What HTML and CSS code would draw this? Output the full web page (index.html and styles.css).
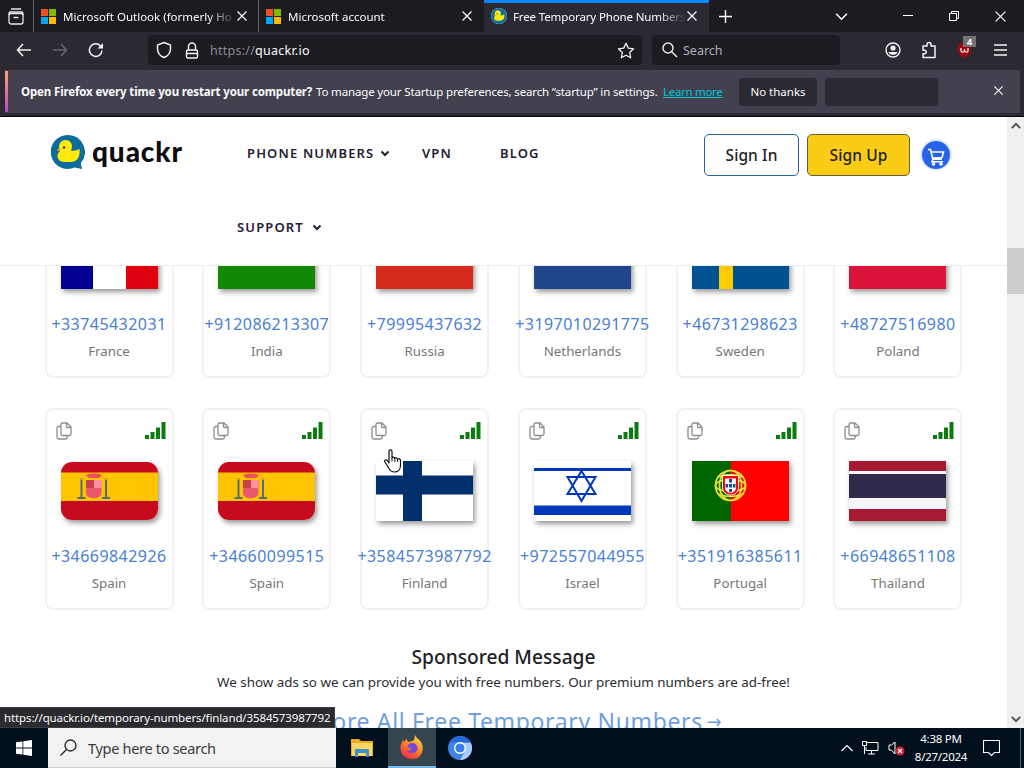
FILE: index.html
```html
<!DOCTYPE html>
<html lang="en">
<head>
    <meta charset="UTF-8">
    <meta name="viewport" content="width=device-width, initial-scale=1.0">
    <title>Free Temporary Phone Numbers</title>
    <link rel="stylesheet" href="styles.css">
</head>
<body>
    <svg class="defs" width="0" height="0">
        <symbol id="ms" viewBox="0 0 16 16">
            <path fill="#f25022" d="M0 0h7.5v7.5H0z"/><path fill="#7fba00" d="M8.5 0H16v7.5H8.5z"/>
            <path fill="#00a4ef" d="M0 8.500h7.500V16H0z"/><path fill="#ffb900" d="M8.500 8.500H16V16H8.500z"/>
        </symbol>
        <symbol id="duck" viewBox="0 0 34 34">
            <path fill="#0c6c9c" d="M17 0a17 17 0 1 0 6.500 32.600L31 34l-1.200-6A17 17 0 0 0 17 0z"/>
            <path fill="#ffeb0a" d="M8 12c0-4 3-7 6.500-7 4 0 6.500 3 6.500 6 0 2-1 3.500-1 4.500 3 .8 6-.5 8.500-1.500.8 7-1.500 13-9 13h-6c-4.500 0-7-3-7-6 0-2 1-3.500 2.500-4.500C8 15.500 8 14 8 12z"/>
            <path fill="#f29a1f" d="M9 13.500l-3 .8c0 1.700 1.500 2.200 3.500 1.700z"/>
            <circle cx="13" cy="12.500" r="1.200" fill="#34424c"/>
        </symbol>
        <symbol id="x" viewBox="0 0 12 12"><path d="M1.500 1.500l9 9M10.500 1.500l-9 9" fill="none" stroke="currentColor" stroke-width="1.200"/></symbol>
        <symbol id="down" viewBox="0 0 12 12"><path d="M1 3.500l5 5 5-5" fill="none" stroke="currentColor" stroke-width="1.500"/></symbol>
        <symbol id="caret" viewBox="0 0 10 10"><path d="M1.500 3.500L5 7l3.500-3.500" fill="none" stroke="currentColor" stroke-width="2"/></symbol>
        <symbol id="copy" viewBox="0 0 16 18">
            <path d="M6.500 1H11l4 4v7a1.500 1.500 0 0 1-1.500 1.500H6.500A1.500 1.500 0 0 1 5 12V2.500A1.500 1.500 0 0 1 6.500 1zM10.500 1v3.500a1 1 0 0 0 1 1H15M5 4.500H3A1.800 1.800 0 0 0 1 6.300v8.900A1.800 1.800 0 0 0 2.800 17h6.700a1.800 1.800 0 0 0 1.800-1.800v-1.700" fill="none" stroke="#8d8d91" stroke-width="1.300"/>
        </symbol>
        <symbol id="signal" viewBox="0 0 21 17">
            <path fill="#0b7d10" d="M0 13h4v4H0zM5.500 10h4v7h-4zM11 5.500h4V17h-4zM16.500 0h4v17h-4z"/>
        </symbol>
        <symbol id="spain" viewBox="0 0 97 58">
            <path fill="#c60b1e" d="M0 0h97v58H0z"/><path fill="#ffc400" d="M0 10.500h97v28.500H0z"/>
            <path fill="#596a7b" d="M19.500 17h2v18h-2zM44 17h2v18h-2zM16.500 35h8v2h-8zM41 35h8v2h-8z"/>
            <path fill="#c9a33a" d="M19 16h3v2h-3zM43.500 16h3v2h-3z"/>
            <path fill="#ed4f5c" d="M25 13c5-2 11-2 16 0l-3 3H28z"/>
            <path fill="#ea596e" d="M25 18h15.500v13c0 7-15.500 7-15.500 0z"/>
            <path fill="#c8414b" d="M25 18h8v8h-8z"/><path fill="#ff8e9f" d="M33 18h7.500v8H33z"/>
        </symbol>
        <symbol id="portugal" viewBox="0 0 97 60">
            <path fill="#060" d="M0 0h39v60H0z"/><path fill="#f00" d="M38.800 0H97v60H38.800z"/>
            <g fill="none" stroke="#e9e336" stroke-width="1.700">
                <circle cx="38.500" cy="24.500" r="15"/><ellipse cx="38.500" cy="24.500" rx="15" ry="6"/>
                <ellipse cx="38.500" cy="24.500" rx="11" ry="15"/><path d="M26 16q12.500-5 25 0M26 33q12.500 5 25 0"/>
            </g>
            <path fill="#f00" stroke="#fff" d="M30.500 14.500h16v12c0 10-16 10-16 0z"/>
            <path fill="#fff" d="M33 17.500h11v9c0 7-11 7-11 0z"/>
            <path fill="#1b4a9c" d="M37 18h3v3.500h-3zM37 23h3v3.500h-3zM37 28h3v3h-3zM33.500 23h2.500v3.500h-2.500zM41 23h2.500v3.500H41z"/>
        </symbol>
    </svg>

    <div class="tabs">
        <div class="firefox-view">
            <svg width="16" height="17" viewBox="0 0 16 17" fill="none" stroke="#e8e8ea" stroke-width="1.300"><path d="M3 1h10M1.500 4h13M5.500 9.500h5"/><rect x="1" y="5.500" width="14" height="10.500" rx="2"/><path d="M1 7V5.500A1.500 1.500 0 0 1 2.500 4M15 7V5.500A1.500 1.500 0 0 0 13.500 4"/></svg>
        </div>
        <div class="tab tab-one"><svg class="favicon"><use href="#ms"/></svg><span class="tab-title">Microsoft Outlook (formerly Ho</span><svg class="tab-close"><use href="#x"/></svg></div>
        <div class="tab"><svg class="favicon"><use href="#ms"/></svg><span class="tab-title">Microsoft account</span><svg class="tab-close"><use href="#x"/></svg></div>
        <div class="tab active"><svg class="favicon duck-icon"><use href="#duck"/></svg><span class="tab-title">Free Temporary Phone Numbers</span><svg class="tab-close"><use href="#x"/></svg></div>
        <svg class="new-tab" width="13" height="13" viewBox="0 0 13 13"><path d="M6.500 0v13M0 6.500h13" stroke="#fff" stroke-width="1.400"/></svg>
        <svg class="all-tabs"><use href="#down"/></svg>
        <div class="window-buttons">
            <svg width="12" height="12" viewBox="0 0 12 12"><path d="M1 5.500h10" stroke="#fff"/></svg>
            <svg width="12" height="12" viewBox="0 0 12 12" fill="none" stroke="#fff"><path d="M1.500 3.500h7v7h-7zM3.500 3.500v-2h7v7h-2"/></svg>
            <svg width="13" height="13"><use href="#x"/></svg>
        </div>
    </div>

    <div class="toolbar">
        <div class="nav-buttons">
            <svg width="16" height="16" viewBox="0 0 16 16" fill="none" stroke="#f2f2f4" stroke-width="1.500"><path d="M15 8H1.500M7 2L1.500 8 7 14"/></svg>
            <svg width="16" height="16" viewBox="0 0 16 16" fill="none" stroke="#68676d" stroke-width="1.500"><path d="M1 8h13.500M9 2l5.500 6L9 14"/></svg>
            <svg width="16" height="16" viewBox="0 0 16 16" fill="none" stroke="#f2f2f4" stroke-width="1.500"><path d="M14 8.500A6.300 6.300 0 1 1 12.500 4l1.500 2"/><path d="M15 1v5.500H9.500z" fill="#f2f2f4" stroke="none"/></svg>
        </div>
        <div class="url-bar">
            <svg width="16" height="18" viewBox="0 0 16 18" fill="none" stroke="#f2f2f4" stroke-width="1.400"><path d="M8 1.500L14.500 4v3.500c0 4-2.500 7.500-6.500 9-4-1.500-6.500-5-6.500-9V4z"/></svg>
            <svg width="14" height="17" viewBox="0 0 14 17" fill="none" stroke="#f2f2f4" stroke-width="1.400"><rect x="1.500" y="8" width="11" height="8" rx="1.500"/><path d="M3.500 8V4.500a3.500 3.500 0 0 1 7 0V8M2 11.500h10"/></svg>
            <span class="url"><span class="scheme">https://</span>quackr.io</span>
            <svg class="star" width="18" height="17" viewBox="0 0 18 17" fill="none" stroke="#f2f2f4" stroke-width="1.300"><path stroke-linejoin="round" d="M9 1.200l2.300 4.900 5.300.7-3.900 3.700 1 5.300L9 13.200l-4.700 2.600 1-5.300-3.900-3.700 5.300-.7z"/></svg>
        </div>
        <div class="search-bar">
            <svg width="16" height="16" viewBox="0 0 16 16" fill="none" stroke="#e8e8ea" stroke-width="1.500"><circle cx="6" cy="6" r="5"/><path d="M9.700 9.700L15 15"/></svg>
            <span>Search</span>
        </div>
        <div class="extensions">
            <svg width="16" height="16" viewBox="0 0 16 16"><circle cx="8" cy="8" r="7" fill="none" stroke="#f2f2f4" stroke-width="1.400"/><circle cx="8" cy="6" r="2.600" fill="#f2f2f4"/><path fill="#f2f2f4" d="M3.500 10h9c-1 3.800-8 3.800-9 0z"/></svg>
            <svg width="16" height="18" viewBox="0 0 16 18" fill="none" stroke="#f2f2f4" stroke-width="1.500"><path stroke-linejoin="round" d="M6 5V3.500a2 2 0 0 1 4 0V5h4v11.500H2v-3.800h1.500a1.700 1.700 0 0 0 0-3.500H2V5z"/></svg>
            <div class="ublock">
                <svg width="15" height="16" viewBox="0 0 15 16"><path fill="#9c0710" d="M7.500 0L14 3v5c0 4-3 6-6.500 8C4 14 1 12 1 8V3z"/><path d="M4 6v3q1.700 2.500 3.500 0V7v2q2 2.500 3.500 0V6" fill="none" stroke="#fff" stroke-width="1.200"/></svg>
                <span class="count">4</span>
            </div>
            <svg class="app-menu" width="13" height="12" viewBox="0 0 13 12"><path d="M0 1h13M0 6h13M0 11h13" stroke="#f2f2f4" stroke-width="1.400"/></svg>
        </div>
    </div>

    <div class="notice-wrap">
        <div class="notice">
            <b class="notice-title">Open Firefox every time you restart your computer?</b>
            <span class="notice-text">To manage your Startup preferences, search “startup” in settings.</span>
            <span class="learn"><a>Learn more</a></span>
            <span class="notice-button">No thanks</span>
            <span class="notice-button blank"></span>
            <svg class="notice-close"><use href="#x"/></svg>
        </div>
    </div>

    <div class="viewport">
        <div class="page">
            <header class="header">
                <div class="logo"><svg width="34" height="34"><use href="#duck"/></svg><span>quackr</span></div>
                <nav class="menu">
                    <div class="menu-row first"><span class="phone">PHONE NUMBERS</span><svg class="caret"><use href="#caret"/></svg><span class="vpn">VPN</span><span class="blog">BLOG</span></div>
                    <div class="menu-row"><span class="support">SUPPORT</span><svg class="caret"><use href="#caret"/></svg></div>
                </nav>
                <div class="account">
                    <span class="button sign-in">Sign In</span>
                    <span class="button sign-up">Sign Up</span>
                    <span class="cart"><svg width="17" height="18" viewBox="0 0 17 18" fill="none" stroke="#fff" stroke-width="1.600"><path d="M0 1.500h2.500l2.300 9.800h9M3.500 4h12l-1.500 5.500-9.500.5M5 11.500l-1 2.300h11"/><circle cx="5.500" cy="16" r="1"/><circle cx="13" cy="16" r="1"/></svg></span>
                </div>
            </header>
            <main class="content">
                <div class="numbers">
                    <div class="card"><div class="flag france"></div><a>+33745432031</a><p>France</p></div>
                    <div class="card"><div class="flag india"></div><a>+912086213307</a><p>India</p></div>
                    <div class="card"><div class="flag russia"></div><a>+79995437632</a><p>Russia</p></div>
                    <div class="card"><div class="flag netherlands"></div><a>+3197010291775</a><p>Netherlands</p></div>
                    <div class="card"><div class="flag sweden"></div><a>+46731298623</a><p>Sweden</p></div>
                    <div class="card"><div class="flag poland"></div><a>+48727516980</a><p>Poland</p></div>

                    <div class="card"><div class="card-top"><svg class="copy"><use href="#copy"/></svg><svg class="signal"><use href="#signal"/></svg></div><div class="flag spain"><svg width="97" height="58"><use href="#spain"/></svg></div><a>+34669842926</a><p>Spain</p></div>
                    <div class="card"><div class="card-top"><svg class="copy"><use href="#copy"/></svg><svg class="signal"><use href="#signal"/></svg></div><div class="flag spain"><svg width="97" height="58"><use href="#spain"/></svg></div><a>+34660099515</a><p>Spain</p></div>
                    <div class="card"><div class="card-top"><svg class="copy"><use href="#copy"/></svg><svg class="signal"><use href="#signal"/></svg></div><div class="flag"><svg width="97" height="60"><path fill="#fff" d="M0 0h97v60H0z"/><path fill="#002f6c" d="M27 0h19v60H27zM0 14.500h97v19H0z"/></svg></div><a>+3584573987792</a><p>Finland</p>
                        <svg class="pointer" width="18" height="24" viewBox="0 0 18 24"><path fill="#fff" stroke="#111" stroke-width="1.200" stroke-linejoin="round" d="M5 14V2.500C5 .3 8 .3 8 2.500V9c.5-1.500 2.700-1 2.800.5.6-1.200 2.600-.7 2.800.8.800-1 2.900-.5 2.900 1.200v5c0 4-2.500 6.500-6 6.500-3 0-4.500-1.500-5.500-3.500l-4-6.500c-1-1.800 1-3 2.300-1.500z"/><path d="M8 9v3.500M10.800 9.500V13M13.600 10.500V13" stroke="#111"/></svg>
                    </div>
                    <div class="card"><div class="card-top"><svg class="copy"><use href="#copy"/></svg><svg class="signal"><use href="#signal"/></svg></div><div class="flag"><svg width="97" height="60"><path fill="#fff" d="M0 0h97v60H0z"/><path fill="#0038b8" d="M0 7h97v3H0zM0 44.500h97V54H0z"/><path d="M47.500 10l14 23h-28zM47.500 40l14-24h-28z" fill="none" stroke="#0038b8" stroke-width="2"/></svg></div><a>+972557044955</a><p>Israel</p></div>
                    <div class="card"><div class="card-top"><svg class="copy"><use href="#copy"/></svg><svg class="signal"><use href="#signal"/></svg></div><div class="flag"><svg width="97" height="60"><use href="#portugal"/></svg></div><a>+351916385611</a><p>Portugal</p></div>
                    <div class="card"><div class="card-top"><svg class="copy"><use href="#copy"/></svg><svg class="signal"><use href="#signal"/></svg></div><div class="flag thailand"></div><a>+66948651108</a><p>Thailand</p></div>
                </div>
                <h2 class="sponsored">Sponsored Message</h2>
                <p class="ads">We show ads so we can provide you with free numbers. Our premium numbers are ad-free!</p>
                <a class="explore">Explore All Free Temporary Numbers <span class="arrow">→</span></a>
            </main>
        </div>
        <div class="scrollbar">
            <svg width="10" height="10" viewBox="0 0 12 12"><path d="M1 8.500l5-5 5 5" fill="none" stroke="#505050" stroke-width="2.200"/></svg>
            <div class="thumb"></div>
            <svg class="scroll-down" width="10" height="10" viewBox="0 0 12 12"><path d="M1 3.500l5 5 5-5" fill="none" stroke="#505050" stroke-width="2.200"/></svg>
        </div>
        <div class="link-status"><span>https://quackr.io/temporary-numbers/finland/3584573987792</span></div>
    </div>

    <div class="taskbar">
        <div class="start"><svg width="16" height="16" viewBox="0 0 16 16"><path fill="#fff" d="M0 2.300l6.500-.9v6.200H0zM7.300 1.300L16 0v7.600H7.300zM0 8.400h6.500v6.200L0 13.700zM7.300 8.400H16V16l-8.700-1.300z"/></svg></div>
        <div class="task-search">
            <svg width="17" height="17" viewBox="0 0 17 17" fill="none" stroke="#222" stroke-width="1.300"><circle cx="10.500" cy="6.500" r="5.500"/><path d="M6.500 10.500L.5 16.500"/></svg>
            <span>Type here to search</span>
        </div>
        <div class="app explorer"><svg width="22" height="20" viewBox="0 0 22 20"><path fill="#e9ad21" d="M0 1h8l2 2h12v15H0z"/><path fill="#ffd75e" d="M1 5h20v13H1z"/><path fill="#3d8fd1" d="M4 11h14v8h-3v-4H7v4H4z"/></svg></div>
        <div class="app current"><svg width="24" height="24" viewBox="0 0 24 24">
            <defs><linearGradient id="fire" x1=".8" y1="0" x2=".2" y2="1"><stop offset="0" stop-color="#ffe14a"/><stop offset=".45" stop-color="#ff8a1f"/><stop offset="1" stop-color="#f5224e"/></linearGradient></defs>
            <path fill="url(#fire)" d="M15 0c1 3 4 4 6 7 4 7 1 17-9 17C4 24 0 18 .5 12 .7 9 2 7 3 5l1 2c1-1 1-2 2.500-3l1.500 3c2-.5 5-1 6-2 .8-1.500.5-3 1-5z"/>
            <path fill="#7747d6" d="M12 8c4 0 6 3 5.500 6-.7 5-8.500 6-11 1.500 3 .5 4-.5 5.500-1.500-2-1-3-2-5-2 1-3 3-4 5-4z"/></svg></div>
        <div class="app"><svg width="24" height="24" viewBox="0 0 24 24"><circle cx="12" cy="12" r="12" fill="#3f82e8"/><path fill="#a9cbfb" d="M12 6.500h10.700A12 12 0 0 1 12 24l5-9z"/><path fill="#246bd6" d="M1.500 6.200A12 12 0 0 1 22.700 6.500H12z"/><circle cx="12" cy="12" r="6" fill="#fff"/><circle cx="12" cy="12" r="4.600" fill="#377ee6"/></svg></div>
        <div class="tray">
            <svg width="12" height="8" viewBox="0 0 12 8"><path d="M.5 7L6 1.500 11.500 7" fill="none" stroke="#fff" stroke-width="1.200"/></svg>
            <svg width="17" height="14" viewBox="0 0 17 14" fill="none" stroke="#fff"><path d="M5 1.500h11v8H4V6M9.500 9.500v3.500M6 13h7M.5.500h4v4h-4zM2.500 4.500V13"/></svg>
            <svg width="17" height="16" viewBox="0 0 17 16"><path d="M1 5h2.500L7 2v12l-3.500-4H1z" fill="none" stroke="#fff"/><circle cx="12" cy="11" r="4.500" fill="#d51f30"/><path d="M10 9l4 4M14 9l-4 4" stroke="#fff" stroke-width="1.200"/></svg>
            <div class="clock"><span>4:38 PM</span><span class="date">8/27/2024</span></div>
            <svg class="action" width="17" height="17" viewBox="0 0 17 17"><path d="M.5.500h16v12h-5L8.500 15.500l-3-3h-5z" fill="none" stroke="#fff" stroke-width="1.100"/></svg>
        </div>
    </div>
</body>
</html>
```
FILE: styles.css
```css
* {
    box-sizing: border-box;
}
body {
    margin: 0;
    width: 1024px;
    height: 768px;
    overflow: hidden;
    display: flex;
    flex-direction: column;
    background: #fff;
    font-family: "Noto Sans", "Open Sans", sans-serif;
    white-space: nowrap;
}
.defs {
    display: none;
}
svg {
    flex: none;
}

/* browser tabs */
.tabs {
    height: 32px;
    display: flex;
    align-items: center;
    background: #1c1b22;
    color: #fbfbfe;
    font-size: 11.5px;
}
.firefox-view {
    width: 34px;
    height: 32px;
    padding-left: 8px;
    display: flex;
    align-items: center;
    border-right: 1px solid #64636a;
}
.tab {
    width: 225px;
    height: 32px;
    padding: 0 11px 0 7px;
    display: flex;
    align-items: center;
}
.tab-one {
    border-right: 1px solid #64636a;
    padding-right: 10px;
}
.active {
    background: #2b2a33;
    border-top: 3px solid #0a84ff;
    padding-bottom: 3px;
    letter-spacing: -.13px;
}
.favicon {
    width: 15px;
    height: 15px;
    margin-right: 7px;
}
.duck-icon {
    width: 16px;
    height: 16px;
    margin-right: 6px;
    background: #b8e4f2;
    border-radius: 8px;
}
.tab-title {
    width: 172px;
    -webkit-mask-image: linear-gradient(to right, #000 145px, transparent 174px);
    mask-image: linear-gradient(to right, #000 145px, transparent 174px);
}
.tab-close {
    width: 12px;
    height: 12px;
    margin-left: auto;
}
.new-tab {
    margin-left: 10px;
}
.all-tabs {
    width: 13px;
    height: 13px;
    margin-left: 103px;
}
.window-buttons {
    margin: 0 17px 0 auto;
    display: flex;
    gap: 34px;
}

/* address bar */
.toolbar {
    height: 36px;
    display: flex;
    align-items: center;
    background: #2b2a33;
    color: #fbfbfe;
    font-size: 12.500px;
}
.nav-buttons {
    width: 148px;
    padding-left: 16px;
    display: flex;
    gap: 20px;
}
.url-bar {
    width: 494px;
    height: 30px;
    padding: 0 7px 0 8px;
    display: flex;
    align-items: center;
    background: #1c1b22;
    border-radius: 4px;
}
.url-bar svg + svg {
    margin-left: 13px;
}
.url {
    margin-left: 11px;
    letter-spacing: .25px;
}
.scheme {
    color: #8b8a91;
}
.star {
    margin-left: auto;
}
.search-bar {
    width: 188px;
    height: 30px;
    margin-left: 10px;
    padding-left: 10px;
    display: flex;
    align-items: center;
    gap: 5px;
    background: #1c1b22;
    border-radius: 4px;
    color: #b0afb5;
}
.extensions {
    margin: 0 17px 0 auto;
    display: flex;
    align-items: center;
    gap: 20px;
}
.app-menu {
    margin-left: 2px;
}
.ublock {
    position: relative;
    display: flex;
}
.count {
    position: absolute;
    left: 6px;
    top: -6px;
    width: 13px;
    height: 11px;
    background: #737373;
    font-size: 9.500px;
    font-weight: bold;
    line-height: 11px;
    text-align: center;
}

/* startup question */
.notice-wrap {
    height: 49px;
    padding: 2px 4px 4px 5px;
    background: #2b2a33;
    border-bottom: 1px solid #08080a;
}
.notice {
    height: 43px;
    padding-left: 13px;
    display: flex;
    align-items: center;
    background: #42414d;
    border: 1px solid #54535d;
    border-left: 3px solid;
    border-image: linear-gradient(to bottom, #ffa36c, #b24cc4) 0 0 0 3;
    color: #fbfbfe;
    font-size: 11.500px;
}
.notice-title {
    width: 295px;
    letter-spacing: -.14px;
}
.notice-text {
    width: 347px;
    letter-spacing: -.15px;
}
.learn {
    width: 76px;
    letter-spacing: -.3px;
    color: #00c4d8;
}
.learn a {
    text-decoration: underline;
}
.notice-button {
    width: 78px;
    height: 28px;
    line-height: 27px;
    text-align: center;
    background: #2b2a33;
    border-radius: 3px;
}
.blank {
    width: 113px;
    margin-left: 8px;
}
.notice-close {
    width: 11px;
    height: 11px;
    margin: 0 15px 2px auto;
}

/* page */
.viewport {
    position: relative;
    height: 611px;
    display: flex;
    overflow: hidden;
}
.page {
    width: 1007px;
    font-family: "Noto Sans", sans-serif;
}
.header {
    position: relative;
    z-index: 1;
    height: 149px;
    padding-left: 51px;
    display: flex;
    align-items: flex-start;
    background: #fff;
    border-bottom: 1px solid #ececec;
}
.logo {
    width: 186px;
    padding-top: 18px;
    display: flex;
    gap: 7px;
    font-family: Lato, sans-serif;
    font-size: 28px;
    font-weight: 900;
    letter-spacing: .9px;
    line-height: 32px;
    color: #0d0d0d;
}
.menu {
    width: 467px;
    margin-top: -1px;
    color: #1f2033;
    font-size: 13px;
    font-weight: 600;
    letter-spacing: 1.150px;
}
.menu-row {
    height: 74px;
    display: flex;
    align-items: center;
}
.first {
    padding-left: 10px;
}
.phone {
    width: 133px;
}
.vpn {
    width: 78px;
    margin-left: 32px;
}
.support {
    width: 75px;
}
.caret {
    width: 10px;
    height: 10px;
}
.account {
    padding-top: 17px;
    display: flex;
    align-items: center;
}
.button {
    width: 95px;
    height: 42px;
    line-height: 40px;
    border: 1px solid #2763a5;
    border-radius: 5px;
    text-align: center;
    font-size: 15.500px;
    font-weight: 500;
    letter-spacing: .1px;
    color: #222;
}
.sign-up {
    width: 103px;
    margin-left: 8px;
    background: #facc15;
    border-color: #665c3c;
}
.cart {
    width: 32px;
    height: 32px;
    margin-left: 10px;
    padding: 3px 0 0;
    display: flex;
    align-items: center;
    justify-content: center;
    border: 2px solid #e6ebfb;
    border-radius: 50%;
    background: #2563eb;
}
.content {
    margin-top: -90px;
    display: flex;
    flex-direction: column;
    align-items: center;
}
.numbers {
    display: grid;
    grid-template-columns: repeat(6, 129px);
    column-gap: 28.800px;
    row-gap: 30px;
}
.card {
    position: relative;
    height: 202px;
    padding-top: 51px;
    display: flex;
    flex-direction: column;
    align-items: center;
    border: 2px solid #f2f2f2;
    border-radius: 8px;
}
.card:nth-child(n+7) {
    padding-top: 12px;
}
.card-top {
    width: 100%;
    height: 39px;
    padding: 0 6px 0 9px;
    display: flex;
    justify-content: space-between;
}
.copy {
    width: 16px;
    height: 18px;
}
.signal {
    width: 21px;
    height: 17px;
}
.flag {
    width: 97px;
    height: 60px;
    flex: none;
    box-shadow: 2px 3px 5px rgba(0, 0, 0, .4);
}
.flag svg {
    display: block;
}
.france {
    background: linear-gradient(to right, #000091 33%, #fff 33%, #fff 66.500%, #e1000f 66.500%);
}
.india {
    background: linear-gradient(#ff9932 33%, #fff 33%, #fff 55%, #128807 55%);
}
.russia {
    background: linear-gradient(#fff 33%, #0039a6 33%, #0039a6 55%, #d52b1e 55%);
}
.netherlands {
    background: linear-gradient(#ae1c28 33%, #fff 33%, #fff 55%, #21468b 55%);
}
.sweden {
    background: linear-gradient(to right, #005293 27.500%, #fecb00 27.500%, #fecb00 42.500%, #005293 42.500%);
}
.poland {
    background: linear-gradient(#fff 50%, #dc143c 50%);
}
.thailand {
    background: linear-gradient(#a51931 10px, #f4f5f8 10px, #f4f5f8 12.500px, #2d2a4a 12.500px, #2d2a4a 36.500px, #f4f5f8 36.500px, #f4f5f8 48px, #a51931 48px);
}
.spain {
    height: 58px;
    margin: 1px 0;
    border-radius: 11px;
}
.spain svg {
    border-radius: 11px;
}
.card a {
    margin-top: 23px;
    line-height: 24px;
    font-size: 16px;
    letter-spacing: .45px;
    color: #4a80d2;
}
.card p {
    margin: 4px 0 0;
    line-height: 22px;
    font-size: 13.300px;
    color: #77777a;
}
.pointer {
    position: absolute;
    left: 22px;
    top: 39px;
}
.sponsored {
    margin: 33px 0 0;
    line-height: 28px;
    font-size: 19.200px;
    font-weight: 500;
    color: #202124;
}
.ads {
    margin: 0;
    line-height: 22px;
    font-size: 13.400px;
    color: #2c2d30;
}
.explore {
    margin-top: 11px;
    line-height: 34px;
    font-size: 23px;
    letter-spacing: .65px;
    color: #6f9fdf;
}
.arrow {
    position: relative;
    top: -2px;
    margin-left: -3px;
    font-family: "DejaVu Sans", sans-serif;
    font-size: 18px;
}
.scrollbar {
    width: 17px;
    padding: 4px 0;
    display: flex;
    flex-direction: column;
    align-items: center;
    background: #f0f0f0;
}
.thumb {
    width: 17px;
    height: 46px;
    margin-top: 117px;
    background: #cdcdcd;
}
.scroll-down {
    margin-top: auto;
}
.link-status {
    position: absolute;
    left: 0;
    bottom: 0;
    z-index: 2;
    width: 335px;
    height: 21px;
    padding-left: 4px;
    background: #2b2a2e;
    border: 1px solid #3d3c42;
    border-left: 0;
    color: #fbfbfe;
    font-size: 11.500px;
    letter-spacing: -.12px;
    line-height: 20px;
}

/* windows taskbar */
.taskbar {
    height: 40px;
    display: flex;
    align-items: center;
    background: #01101c;
    color: #fff;
}
.start {
    width: 48px;
    display: flex;
    justify-content: center;
}
.task-search {
    width: 288px;
    height: 40px;
    padding-left: 12px;
    display: flex;
    align-items: center;
    gap: 11px;
    background: #f2f2f2;
    border: 1px solid #ccc;
    border-width: 0 0 1px;
    color: #3a3a3a;
    font-size: 14.500px;
    letter-spacing: -.3px;
}
.app {
    width: 48px;
    height: 40px;
    display: flex;
    align-items: center;
    justify-content: center;
}
.explorer {
    width: 52px;
}
.current {
    background: #36454e;
    border-bottom: 2px solid #76b9ed;
}
.tray {
    height: 40px;
    margin: 0 3px 0 auto;
    padding-right: 20px;
    display: flex;
    align-items: center;
    gap: 9px;
    border-right: 1px solid #5b666e;
}
.clock {
    width: 54px;
    display: flex;
    flex-direction: column;
    align-items: center;
    font-size: 11.500px;
    letter-spacing: -.25px;
    line-height: 18px;
}
.action {
    margin-left: 6px;
}
```
